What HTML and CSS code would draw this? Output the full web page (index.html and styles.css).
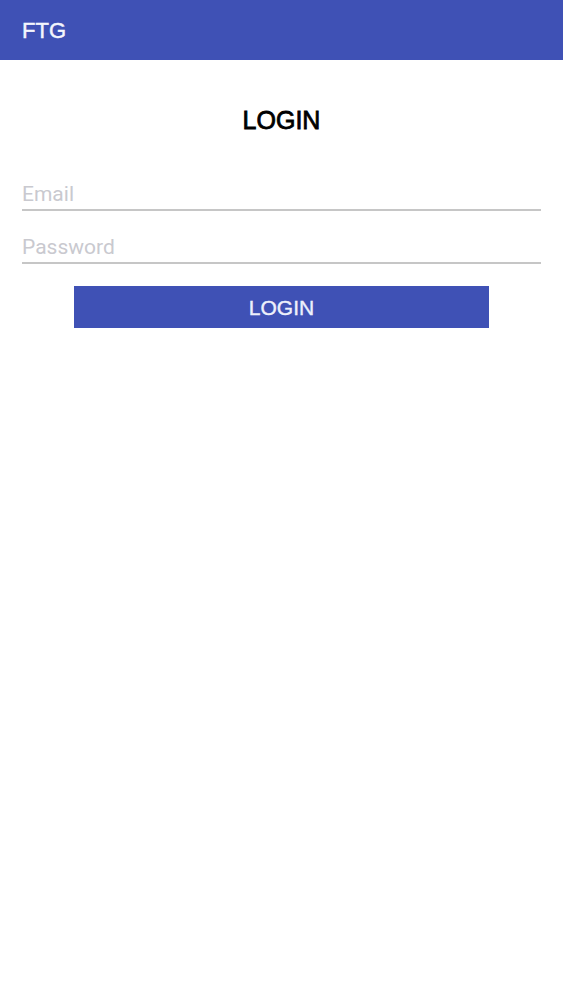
FILE: index.html
```html
<!DOCTYPE html>
<html lang="en">
<head>
<meta charset="utf-8">
<title>FTG</title>
<link rel="stylesheet" href="styles.css">
</head>
<body>
<header class="app-bar">
  <span class="app-title">FTG</span>
</header>
<main class="login">
  <h1 class="login-title">LOGIN</h1>
  <form class="login-form">
    <input class="field" type="email" placeholder="Email">
    <input class="field" type="password" placeholder="Password">
    <button class="login-button" type="button">LOGIN</button>
  </form>
</main>
</body>
</html>
```

FILE: styles.css
```css
* {
  box-sizing: border-box;
}

html, body {
  margin: 0;
  padding: 0;
  background: #ffffff;
}

body {
  font-family: "Liberation Sans", Arial, sans-serif;
  width: 563px;
  min-height: 1000px;
}

.app-bar {
  height: 60px;
  background: #3f51b5;
  padding-left: 22px;
  display: flex;
  align-items: center;
}

.app-title {
  color: #f4f6fd;
  font-size: 22px;
  line-height: 60px;
  padding-top: 1px;
  -webkit-text-stroke: 0.45px #f4f6fd;
}

.login {
  display: flex;
  flex-direction: column;
}

.login-title {
  margin: 46px 0 0;
  text-align: center;
  font-size: 25px;
  line-height: 28px;
  font-weight: 400;
  color: #000000;
  -webkit-text-stroke: 0.8px #000000;
}

.login-form {
  margin-top: 45px;
  padding: 0 22px;
  display: flex;
  flex-direction: column;
  align-items: stretch;
}

.field {
  box-sizing: content-box;
  display: block;
  height: 30px;
  margin: 0 0 21px;
  padding: 0;
  border: none;
  border-bottom: 2px solid #c6c6c6;
  outline: none;
  background: transparent;
  font-family: Roboto, "Noto Sans", sans-serif;
  font-size: 21px;
  color: #222222;
}

.field::placeholder {
  color: #c9c9cf;
  opacity: 1;
}

.login-button {
  align-self: center;
  margin-top: 1px;
  width: 415px;
  height: 42px;
  padding: 2px 0 0;
  border: none;
  border-radius: 0;
  background: #3f51b5;
  color: #eef0fb;
  font-family: "Liberation Sans", Arial, sans-serif;
  font-size: 21px;
  line-height: 40px;
  text-align: center;
  -webkit-text-stroke: 0.4px #eef0fb;
}
```
